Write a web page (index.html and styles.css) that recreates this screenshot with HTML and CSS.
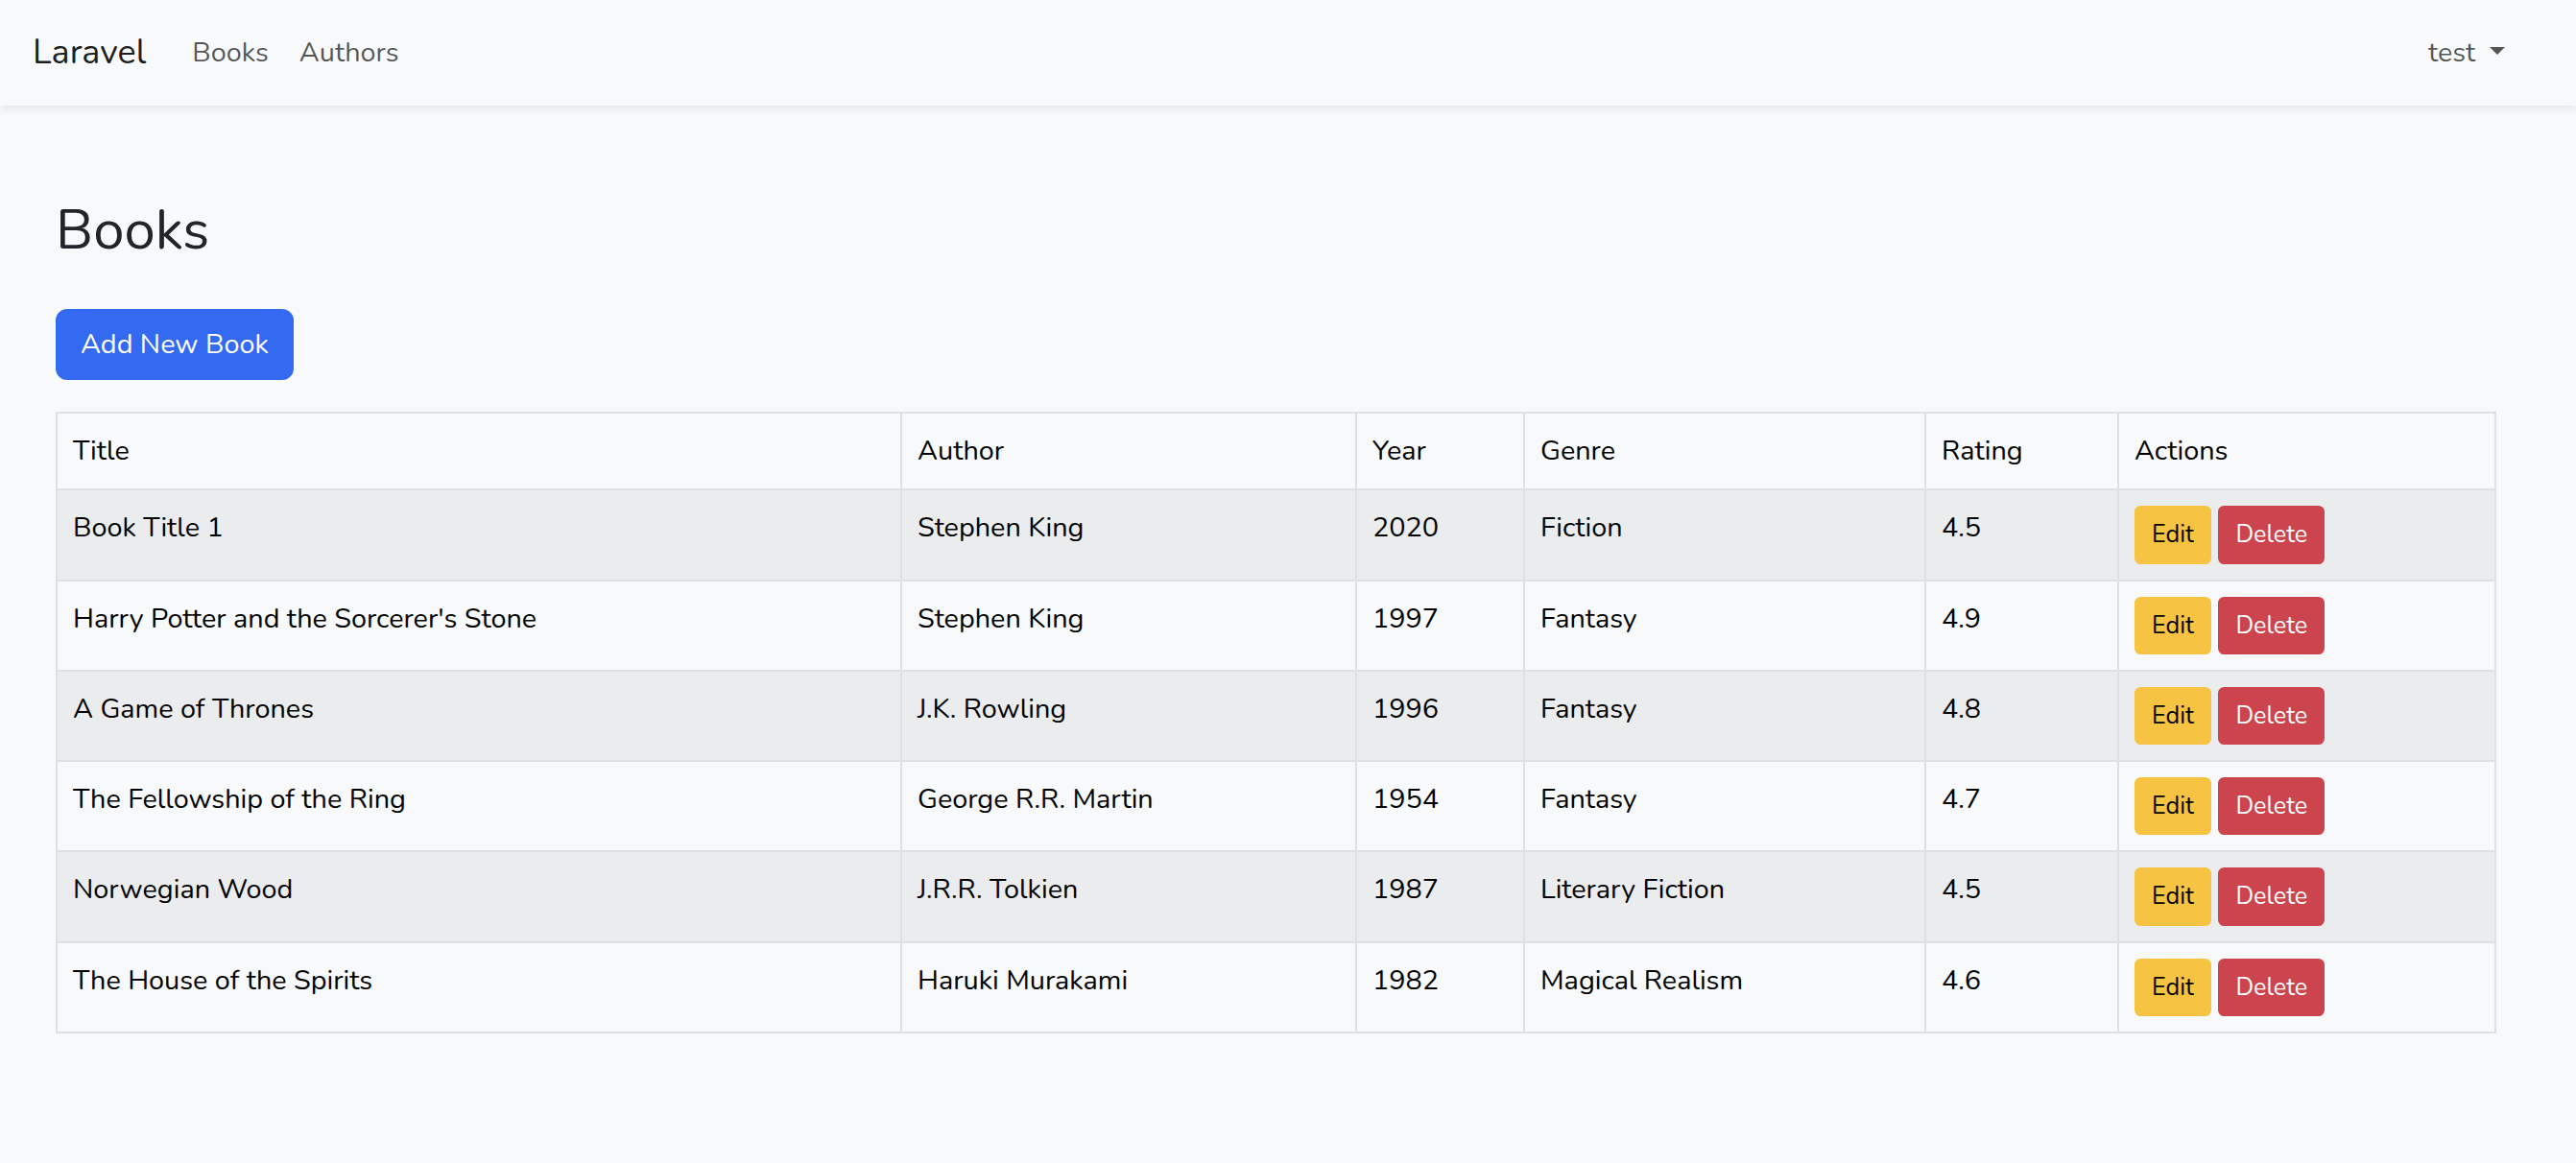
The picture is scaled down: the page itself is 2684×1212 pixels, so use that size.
FILE: index.html
```html
<!DOCTYPE html>
<html lang="en">
<head>
<meta charset="utf-8">
<title>Books</title>
<link rel="stylesheet" href="styles.css">
</head>
<body>
<nav class="navbar">
  <div class="nav-inner">
    <a class="brand" href="#">Laravel</a>
    <ul class="nav-links">
      <li><a class="nav-link" href="#">Books</a></li>
      <li><a class="nav-link" href="#">Authors</a></li>
    </ul>
    <div class="nav-right">
      <a class="nav-link dropdown-toggle" href="#">test</a>
    </div>
  </div>
</nav>
<main class="main">
  <h1 class="page-title">Books</h1>
  <div class="toolbar">
    <a class="btn btn-primary" href="#">Add New Book</a>
  </div>
  <table class="table">
    <thead>
      <tr>
        <th class="c-title">Title</th>
        <th class="c-author">Author</th>
        <th class="c-year">Year</th>
        <th class="c-genre">Genre</th>
        <th class="c-rating">Rating</th>
        <th class="c-actions">Actions</th>
      </tr>
    </thead>
    <tbody>
      <tr>
        <td>Book Title 1</td><td>Stephen King</td><td>2020</td><td>Fiction</td><td>4.5</td>
        <td><a class="btn btn-sm btn-warning" href="#">Edit</a> <button class="btn btn-sm btn-danger">Delete</button></td>
      </tr>
      <tr>
        <td>Harry Potter and the Sorcerer's Stone</td><td>Stephen King</td><td>1997</td><td>Fantasy</td><td>4.9</td>
        <td><a class="btn btn-sm btn-warning" href="#">Edit</a> <button class="btn btn-sm btn-danger">Delete</button></td>
      </tr>
      <tr>
        <td>A Game of Thrones</td><td>J.K. Rowling</td><td>1996</td><td>Fantasy</td><td>4.8</td>
        <td><a class="btn btn-sm btn-warning" href="#">Edit</a> <button class="btn btn-sm btn-danger">Delete</button></td>
      </tr>
      <tr>
        <td>The Fellowship of the Ring</td><td>George R.R. Martin</td><td>1954</td><td>Fantasy</td><td>4.7</td>
        <td><a class="btn btn-sm btn-warning" href="#">Edit</a> <button class="btn btn-sm btn-danger">Delete</button></td>
      </tr>
      <tr>
        <td>Norwegian Wood</td><td>J.R.R. Tolkien</td><td>1987</td><td>Literary Fiction</td><td>4.5</td>
        <td><a class="btn btn-sm btn-warning" href="#">Edit</a> <button class="btn btn-sm btn-danger">Delete</button></td>
      </tr>
      <tr>
        <td>The House of the Spirits</td><td>Haruki Murakami</td><td>1982</td><td>Magical Realism</td><td>4.6</td>
        <td><a class="btn btn-sm btn-warning" href="#">Edit</a> <button class="btn btn-sm btn-danger">Delete</button></td>
      </tr>
    </tbody>
  </table>
</main>
</body>
</html>
```

FILE: styles.css
```css
* { box-sizing: border-box; }
html, body { margin: 0; padding: 0; }
body {
  background: #f8f9fa;
  color: #212529;
  font-family: "Nunito", Lato, "Noto Sans", sans-serif;
  font-size: 28.8px;
  line-height: 1.6;
}
a { text-decoration: none; }

.navbar {
  background: #f8f9fa;
  box-shadow: 0 4px 8px rgba(0, 0, 0, 0.075);
  padding: 16px 0;
  position: relative;
  z-index: 1;
}
.nav-inner {
  display: flex;
  align-items: center;
  padding: 0 58px 0 34px;
}
.brand {
  font-size: 36px;
  line-height: 1.6;
  padding: 10px 0;
  margin-right: 32px;
  color: rgba(0, 0, 0, 0.9);
}
.nav-links {
  display: flex;
  list-style: none;
  margin: 0;
  padding: 0;
}
.nav-link {
  display: block;
  padding: 16px;
  color: rgba(0, 0, 0, 0.66);
}
.nav-right { margin-left: auto; }
.dropdown-toggle::after {
  content: "";
  display: inline-block;
  margin-left: 15px;
  vertical-align: 7.3px;
  border-top: 8px solid;
  border-right: 8px solid transparent;
  border-left: 8px solid transparent;
  border-bottom: 0;
}

.main {
  padding: 0 83px 0 58px;
}
.page-title {
  font-size: 58px;
  font-weight: 400;
  line-height: 72px;
  margin: 94px 0 46px;
}
.toolbar { margin-bottom: 33px; }

.btn {
  display: inline-block;
  font-family: inherit;
  font-weight: 400;
  text-align: center;
  vertical-align: middle;
  border: 2px solid transparent;
  cursor: pointer;
}
.btn-primary {
  font-size: 28.8px;
  line-height: 1.6;
  padding: 12px 24px;
  border-radius: 12px;
  background: #3469f1;
  border-color: #3469f1;
  color: #fff;
}
.btn-sm {
  font-size: 25.2px;
  line-height: 1.6;
  padding: 8px 16px;
  border-radius: 6.4px;
}
.btn-warning {
  background: #f6c343;
  border-color: #f6c343;
  color: #000;
}
.btn-danger {
  background: #cc444d;
  border-color: #cc444d;
  color: #fff;
}

.table {
  width: 100%;
  border-collapse: collapse;
  border: 2px solid #dfe0e4;
  vertical-align: top;
  color: #000;
}
.table th, .table td {
  border: 2px solid #dfe0e4;
  padding: 16px 16px;
  text-align: left;
  font-weight: 400;
  vertical-align: top;
}
.table tbody tr:nth-child(odd) { background: #ebecee; }
.table tbody tr:nth-child(even) { background: #f8f9fa; }
.c-title { width: 880px; }
.c-author { width: 474px; }
.c-year { width: 175px; }
.c-genre { width: 418px; }
.c-rating { width: 201px; }
```
